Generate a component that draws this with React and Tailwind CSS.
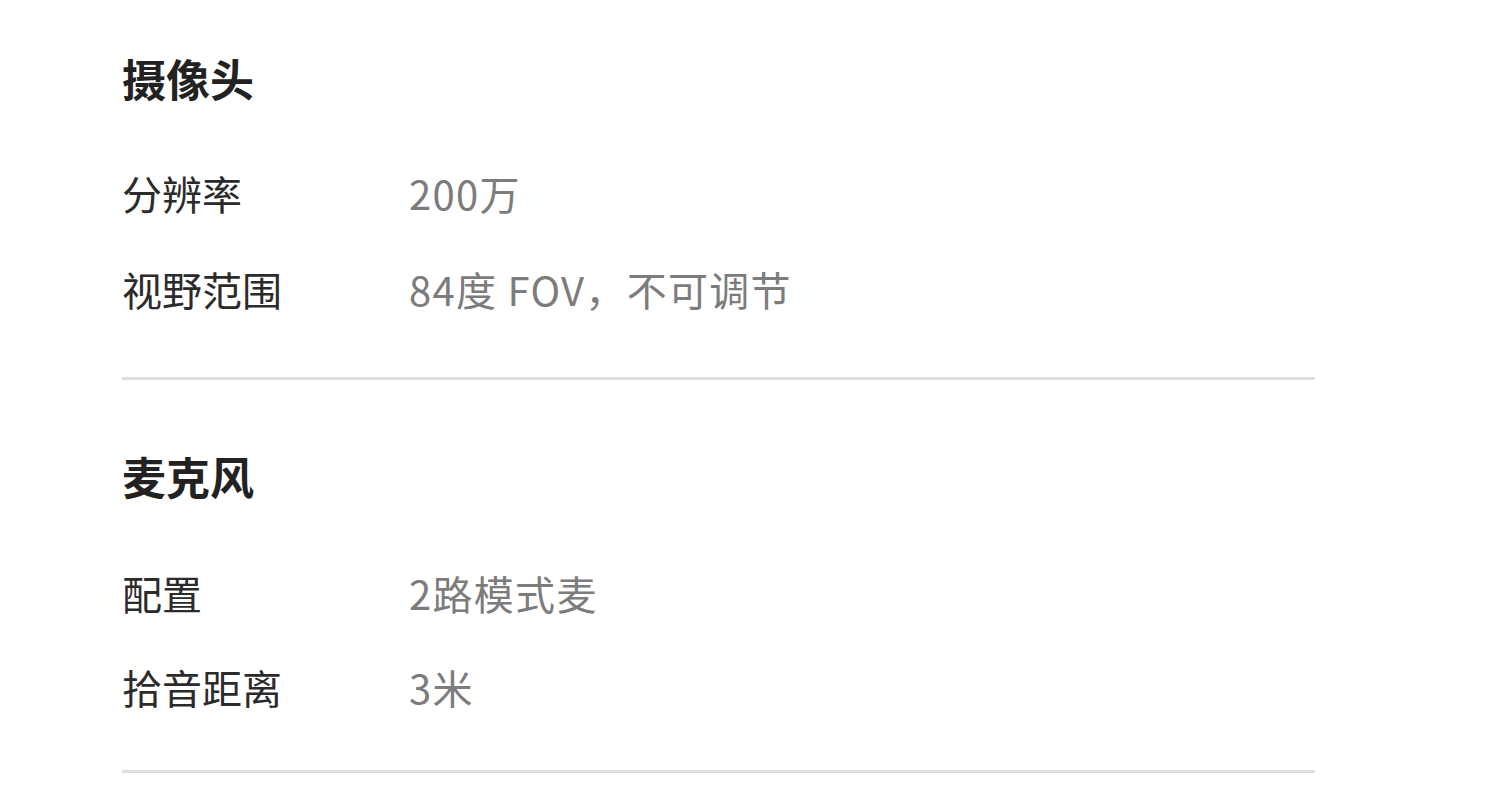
export default function App() {
  const font = { fontFamily: '"Noto Sans CJK SC", "Noto Sans", sans-serif' };
  const Row = ({ label, value, className }) => (
    <div className={"flex h-[56px] items-center text-[40px] leading-[56px] " + className}>
      <div className="w-[287px] text-[#2b2b2b]">{label}</div>
      <div className="tracking-[1.3px] text-[#7c7c7c]">{value}</div>
    </div>
  );
  return (
    <div className="min-h-[796px] w-[1500px] bg-white" style={font}>
      <div className="ml-[122px] w-[1193px] pt-[50px]">
        <div className="h-[56px] text-[44px] font-bold leading-[56px] text-[#222]">摄像头</div>
        <Row label="分辨率" value="200万" className="mt-[59px]" />
        <Row label="视野范围" value="84度 FOV，不可调节" className="mt-[40px]" />
        <div className="mt-[60px] h-[3px] bg-[#dedede]" />
        <div className="mt-[68px] h-[56px] text-[44px] font-bold leading-[56px] text-[#222]">麦克风</div>
        <Row label="配置" value="2路模式麦" className="mt-[61px]" />
        <Row label="拾音距离" value="3米" className="mt-[38px]" />
        <div className="mt-[55px] h-[3px] bg-[#dedede]" />
      </div>
    </div>
  );
}
